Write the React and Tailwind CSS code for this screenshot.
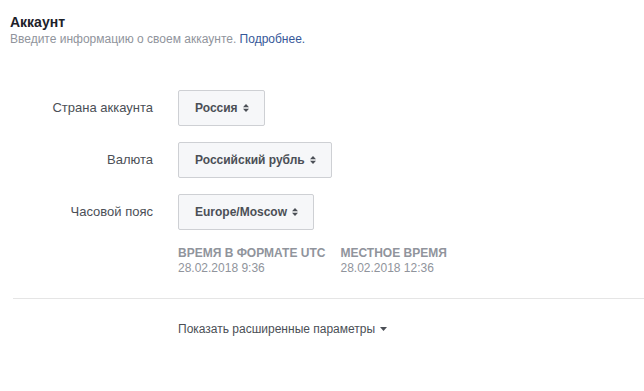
import React from "react";

function Updown() {
  return (
    <svg width="6" height="8" viewBox="0 0 6 8" className="ml-[5px] shrink-0">
      <path d="M0 3.2 L3 0 L6 3.2 Z" fill="#4b4f56" />
      <path d="M0 4.8 L3 8 L6 4.8 Z" fill="#4b4f56" />
    </svg>
  );
}

function SelectBtn({ children }) {
  return (
    <div className="flex h-[36px] items-center rounded-[2px] border border-[#ced0d4] bg-[#f6f7f9] pl-[16px] pr-[15px] text-[12px] font-bold text-[#4b4f56]">
      <span>{children}</span>
      <Updown />
    </div>
  );
}

function Row({ label, children }) {
  return (
    <div className="flex items-center">
      <div className="w-[153px] shrink-0 text-right text-[13px] text-[#4b4f56]">{label}</div>
      <div className="ml-[25px]">{children}</div>
    </div>
  );
}

export default function App() {
  return (
    <div
      className="h-[391px] w-[644px] bg-white"
      style={{ fontFamily: '"Liberation Sans", Arial, sans-serif' }}
    >
      <div className="pl-[10px] pt-[13px]">
        <div className="text-[14px] font-bold leading-[18px] text-[#1d2129]">Аккаунт</div>
        <div className="text-[12px] leading-[16px] text-[#90949c]">
          Введите информацию о своем аккаунте.{" "}
          <span className="text-[#365899]">Подробнее.</span>
        </div>
      </div>
      <div className="mt-[43px] flex flex-col gap-[16px]">
        <Row label="Страна аккаунта">
          <SelectBtn>Россия</SelectBtn>
        </Row>
        <Row label="Валюта">
          <SelectBtn>Российский рубль</SelectBtn>
        </Row>
        <Row label="Часовой пояс">
          <SelectBtn>Europe/Moscow</SelectBtn>
        </Row>
      </div>
      <div className="ml-[178px] mt-[16px] flex gap-[15px] text-[12px] leading-[15px] text-[#90949c]">
        <div>
          <div className="font-bold uppercase">Время в формате UTC</div>
          <div>28.02.2018 9:36</div>
        </div>
        <div>
          <div className="font-bold uppercase">Местное время</div>
          <div>28.02.2018 12:36</div>
        </div>
      </div>
      <div className="ml-[13px] mt-[22px] h-px bg-[#e5e5e5]" />
      <div className="ml-[178px] mt-[21px] flex items-center text-[12px] text-[#4b4f56]">
        <span>Показать расширенные параметры</span>
        <svg width="7" height="4" viewBox="0 0 7 4" className="ml-[5px]">
          <path d="M0 0 L7 0 L3.5 4 Z" fill="#4b4f56" />
        </svg>
      </div>
    </div>
  );
}
